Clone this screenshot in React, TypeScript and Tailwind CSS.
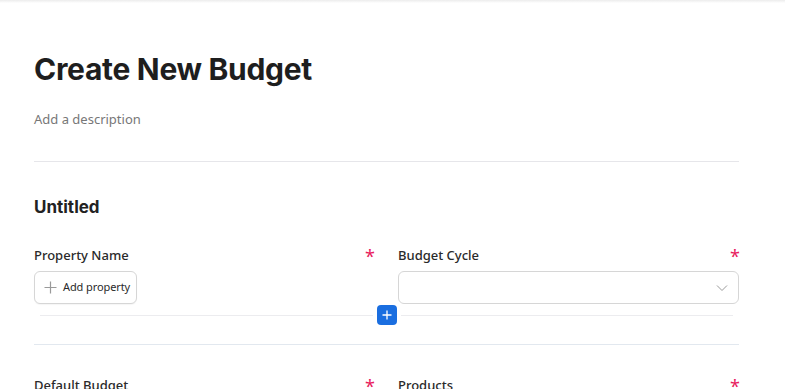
import React from "react";

function Label({ text }: { text: string }) {
  return (
    <div className="flex items-start justify-between h-[20px]">
      <span className="text-[13px] font-medium text-[#2a2a2a] leading-[20px]" style={{ fontFamily: '"Noto Sans", sans-serif' }}>{text}</span>
      <span className="text-[#e8205c] text-[18px] leading-[16px] mt-[3px] -mr-[1px]" style={{ fontFamily: '"Noto Sans", sans-serif' }}>*</span>
    </div>
  );
}

export default function App() {
  return (
    <div className="w-[785px] h-[389px] overflow-hidden bg-white relative" style={{ fontFamily: '"Noto Sans", sans-serif' }}>
      <div className="h-[3px] bg-gradient-to-b from-[#ececec] to-white" />
      <div className="ml-[34px] w-[705px]">
        <h1 className="mt-[48px] text-[30px] leading-[36px] font-bold text-[#1e1e1e] tracking-[-0.3px]" style={{ fontFamily: 'Inter, sans-serif' }}>Create New Budget</h1>
        <div className="mt-[23px] text-[13px] leading-[18px] text-[#777]">Add a description</div>
        <div className="mt-[33px] h-px bg-[#e6e6ea]" />
        <h2 className="mt-[34px] text-[17px] leading-[22px] font-bold text-[#222]" style={{ fontFamily: 'Inter, sans-serif' }}>Untitled</h2>
        <div className="mt-[27px] relative">
          <div className="grid grid-cols-[340px_341px] gap-x-[24px]">
            <div>
              <Label text="Property Name" />
              <div className="mt-[6px] h-[33px]">
                <button className="h-[33px] w-[103px] rounded-[6px] border border-[#d6d6d6] bg-white flex items-center gap-[6px] pl-[9px] shadow-[0_1px_1px_rgba(0,0,0,0.04)]">
                  <svg width="13" height="13" viewBox="0 0 13 13" fill="none" stroke="#9a9a9a" strokeWidth="1.2"><path d="M6.5 0.5v12M0.5 6.5h12" /></svg>
                  <span className="text-[11px] text-[#2a2a2a] tracking-[-0.1px]">Add property</span>
                </button>
              </div>
            </div>
            <div>
              <Label text="Budget Cycle" />
              <div className="mt-[6px] h-[33px] rounded-[6px] border border-[#d6d6d6] bg-white flex items-center justify-end pr-[10px]">
                <svg width="12" height="8" viewBox="0 0 12 8" fill="none" stroke="#9a9a9a" strokeWidth="1"><path d="M1 1.5l5 5 5-5" /></svg>
              </div>
            </div>
          </div>
          <div className="mt-[1px] flex items-center h-[20px]">
            <div className="ml-[6px] w-[333px] h-px bg-[#ececef]" />
            <button className="ml-[4px] w-[20px] h-[20px] rounded-[4px] bg-[#1a6ee0] flex items-center justify-center">
              <svg width="10" height="10" viewBox="0 0 10 10" fill="none" stroke="white" strokeWidth="1.3"><path d="M5 0.5v9M0.5 5h9" /></svg>
            </button>
            <div className="ml-[4px] w-[332px] h-px bg-[#ececef]" />
          </div>
          <div className="mt-[19px] h-px bg-[#e2e8ef]" />
          <div className="mt-[30px] grid grid-cols-[340px_341px] gap-x-[24px]">
            <Label text="Default Budget" />
            <Label text="Products" />
          </div>
        </div>
      </div>
    </div>
  );
}
